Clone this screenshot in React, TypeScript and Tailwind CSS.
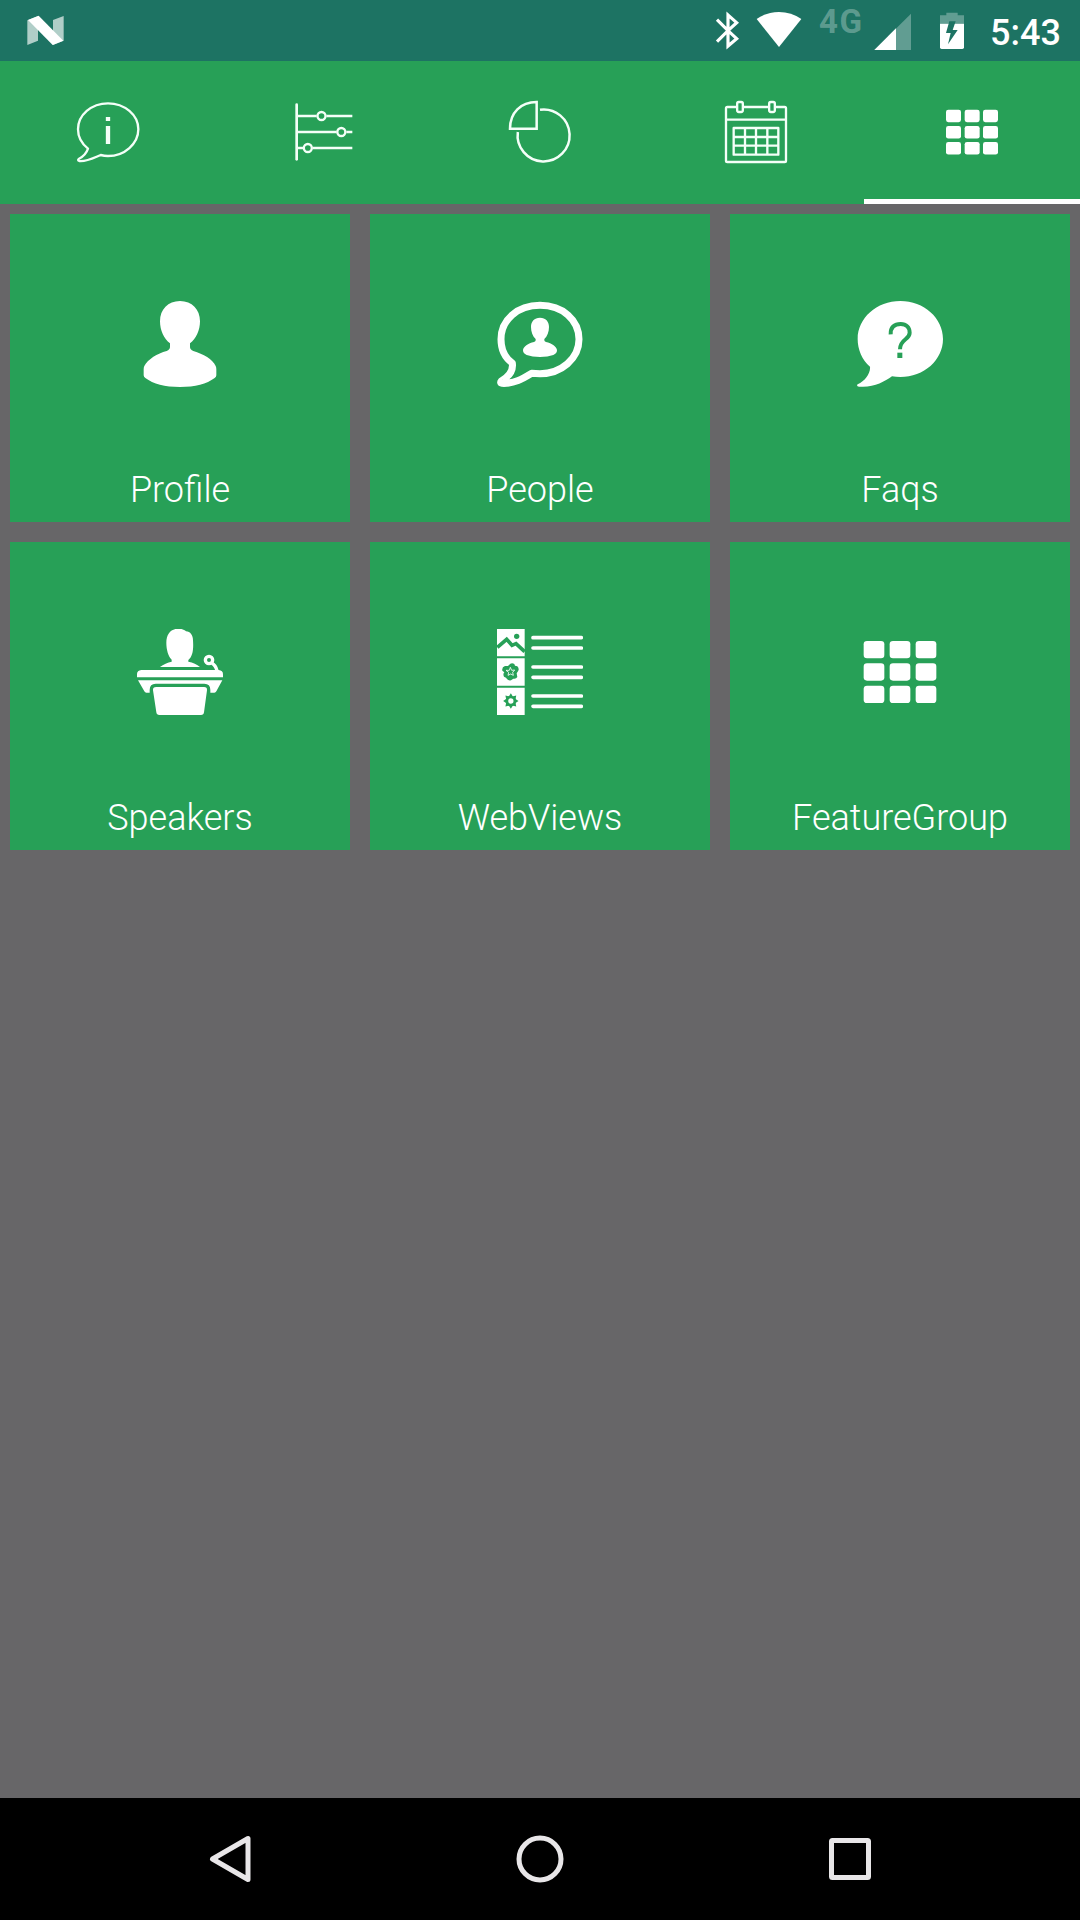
import type { ReactNode } from 'react';

interface IconProps {
    viewBox: string;
    className: string;
    children: ReactNode;
}

const Icon = ({ viewBox, className, children }: IconProps) => (
    <svg viewBox={viewBox} className={className} fill="currentColor">
        {children}
    </svg>
);

const InfoIcon = () => (
    <Icon viewBox="216 288 216 216" className="size-[72px]">
        <path
            d="M264 446C242 429 234 410 234 388C234 345 274 310 324 310S415 345 415 388S374 468 324 468Q313 468 302 465C282 473 262 485 238 483Q232 481 236 477C250 470 260 458 264 446Z"
            fill="none"
            stroke="currentColor"
            strokeWidth="7"
            strokeLinejoin="round"
        />
        <path d="M317.500 351h13v12h-13zM317.500 378h13v54h-13z" />
    </Icon>
);

const SlidersIcon = () => (
    <Icon viewBox="864 288 216 216" className="size-[72px]">
        <g fill="none" stroke="currentColor" strokeWidth="7">
            <path d="M893 348h57M979 348h78M893 396h117M1039 396h18M893 444h16M938 444h119" />
            <path d="M890 314V478" strokeWidth="8" strokeLinecap="round" />
            <circle cx="964.5" cy="348" r="12" />
            <circle cx="1024" cy="396" r="12" />
            <circle cx="923.5" cy="444" r="12" />
        </g>
    </Icon>
);

const PieIcon = () => (
    <Icon viewBox="72 48 216 216" className="size-[72px]">
        <g fill="none" stroke="currentColor" strokeWidth="7.5">
            <path d="M170 66V146H90C90 98 122 66 170 66Z" />
            <path d="M180 89A78 78 0 1 1 113.500 156" />
        </g>
    </Icon>
);

const CalendarIcon = () => (
    <Icon viewBox="60 288 216 216" className="size-[72px]">
        <g fill="none" stroke="currentColor" strokeWidth="7" strokeLinejoin="round">
            <path d="M108 321H82Q78 321 78 325V482Q78 486 82 486H254Q258 486 258 482V325Q258 321 254 321H228M132 321H204M78 359H258" />
            <rect x="111.500" y="306" width="17" height="30" rx="5" />
            <rect x="207.500" y="306" width="17" height="30" rx="5" />
            <path d="M101 384H235V464H101ZM101 411H235M101 437H235M135 384V464M168 384V464M202 384V464" />
        </g>
    </Icon>
);

const TabGridIcon = () => (
    <Icon viewBox="708 288 216 216" className="size-[72px]">
        {[329, 378, 426].map((y) =>
            [738, 794, 849].map((x) => (
                <rect key={`${x}-${y}`} x={x} y={y} width="45" height="37.500" rx="7" />
            ))
        )}
    </Icon>
);

const ProfileIcon = () => (
    <Icon viewBox="51 63 258 258" className="size-[86px]">
        <path d="M180 63C216 63 240 88 240 124C240 151 228 177 210 190V201Q210 209 220 213C250 222 278 238 287 258Q289 262 289 268V286Q289 291 284 294C260 312 226 321 180 321S100 312 76 294Q71 291 71 286V268Q71 262 73 258C84 237 112 221 140 213Q150 209 150 201V190C132 177 120 151 120 124C120 88 144 63 180 63Z" />
    </Icon>
);

const PeopleIcon = () => (
    <Icon viewBox="51 63 258 258" className="size-[86px]">
        <path
            d="M97 249C73 232 63 205 63 178C63 120 112 76 180 76S297 120 297 178S244 281 180 281Q167 281 155 280C132 294 104 312 66 310Q59 309 64 303C84 291 101 276 97 249Z"
            fill="none"
            stroke="currentColor"
            strokeWidth="21"
            strokeLinejoin="round"
        />
        <path d="M180 113C197 113 207 124 207 141C207 156 202 169 193 177V181Q193 184 198 186C215 190 231 200 231 211Q231 220 220 225Q204 231 180 231T140 225Q129 220 129 211C129 200 145 190 162 186Q167 184 167 181V177C158 169 153 156 153 141C153 124 163 113 180 113Z" />
    </Icon>
);

const FaqsIcon = () => (
    <Icon viewBox="51 63 258 258" className="size-[86px]">
        <path d="M181 63C252 63 309 114 309 177S252 291 181 291Q168 291 156 289C132 306 100 324 57 320Q48 318 53 313C75 303 92 280 90 260C66 239 53 209 53 177C53 114 110 63 181 63Z" />
        <path
            d="M152 163C151 142 163 132 182 132C199 132 209 142 209 158C209 180 180 176 180 208"
            fill="none"
            stroke="#27a057"
            strokeWidth="12"
        />
        <path d="M172 218h15v16h-15z" fill="#27a057" />
    </Icon>
);

const SpeakersIcon = () => (
    <Icon viewBox="51 57 258 258" className="size-[86px]">
        <path d="M175 56C185 56 193 59 198 64C211 65 219 75 219 91C221 119 218 139 205 150V155C219 157 231 163 240 171H120C130 163 143 157 155 155V149C145 139 139 119 139 98C139 71 154 56 175 56Z" />
        <path d="M64 180H296Q309 181 309 193V202H51V193Q51 181 64 180Z" />
        <path d="M54 211H307L289 244Q287 248 283 248H271V240Q271 221 253 221H107Q89 221 89 240V248H79Q75 248 73 244Z" />
        <path d="M109 231H252Q262 231 261 241L252 307Q251 315 243 315H118Q110 315 109 307L99 241Q98 231 109 231Z" />
        <circle cx="267" cy="150" r="11" fill="none" stroke="currentColor" strokeWidth="10" />
        <path d="M276 160Q287 166 291 182" fill="none" stroke="currentColor" strokeWidth="10" />
    </Icon>
);

const WebViewsIcon = () => (
    <Icon viewBox="51 57 258 258" className="size-[86px]">
        <path d="M51 57H134V139H51ZM51 145H134V227H51ZM51 233H134V315H51Z" />
        <path
            d="M159 83H304M159 114H304M159 171H304M159 202H304M159 258H304M159 289H304"
            stroke="currentColor"
            strokeWidth="11"
            strokeLinecap="round"
        />
        <g stroke="#27a057" fill="#27a057">
            <path d="M52 112L80 88L96 106L108 101L134 125" fill="none" strokeWidth="11" />
            <circle cx="110" cy="79" r="8" stroke="none" />
            <path
                d="M91 161Q97 158 103 162L105 167L112 169Q119 176 114 184L110 190L112 201Q108 208 100 206L93 211Q84 212 81 207L78 203L72 200Q68 192 73 187L67 182Q65 171 75 168L84 168Z"
                stroke="none"
            />
            <path
                d="M91 172L95 181L104 180L98 187L100 196L92 192L84 196L86 187L78 181L88 181Z"
                fill="none"
                stroke="white"
                strokeWidth="2.5"
                strokeLinejoin="round"
            />
            <circle cx="92.500" cy="273" r="12" fill="none" strokeWidth="8" />
            {[0, 45, 90, 135, 180, 225, 270, 315].map((angle) => (
                <path
                    key={angle}
                    d="M86 260L92.500 250L99 260Z"
                    stroke="none"
                    transform={`rotate(${angle} 92.5 273)`}
                />
            ))}
        </g>
    </Icon>
);

const FeatureGroupIcon = () => (
    <Icon viewBox="51 57 258 258" className="size-[86px]">
        {[93, 160, 227].map((y) =>
            [71, 149, 227].map((x) => (
                <rect key={`${x}-${y}`} x={x} y={y} width="62" height="52" rx="10" />
            ))
        )}
    </Icon>
);

const tabs = [
    { name: 'Info', icon: <InfoIcon /> },
    { name: 'Settings', icon: <SlidersIcon /> },
    { name: 'Charts', icon: <PieIcon /> },
    { name: 'Calendar', icon: <CalendarIcon /> },
    { name: 'More', icon: <TabGridIcon />, active: true },
];

const features = [
    { label: 'Profile', icon: <ProfileIcon /> },
    { label: 'People', icon: <PeopleIcon /> },
    { label: 'Faqs', icon: <FaqsIcon /> },
    { label: 'Speakers', icon: <SpeakersIcon /> },
    { label: 'WebViews', icon: <WebViewsIcon /> },
    { label: 'FeatureGroup', icon: <FeatureGroupIcon /> },
];

const StatusBar = () => (
    <div className="flex h-[61px] shrink-0 items-start bg-[#1d7363] pl-6 text-white">
        <Icon viewBox="72 0 132 183" className="h-[61px] w-11">
            <path d="M82 61L114 48V122L82 135ZM159 60L191 48V122L159 135Z" opacity=".65" />
            <path d="M84 60L116 47L190 122L158 135Z" />
        </Icon>
        <div className="ml-auto flex items-start">
            <Icon viewBox="30 0 120 183" className="h-[61px] w-10">
                <path
                    d="M51 59L84 92L110 68L84 45V138L110 116L84 92L51 125"
                    fill="none"
                    stroke="currentColor"
                    strokeWidth="9.5"
                />
            </Icon>
            <Icon viewBox="150 0 180 183" className="h-[61px] w-[60px]">
                <path d="M170 57Q200 36 237 36T304 57L237 141Z" />
            </Icon>
            <span className="mt-1 ml-[9px] w-[54px] text-[33px] leading-9 font-bold tracking-[1.5px] text-white/30">
                4G
            </span>
            <Icon viewBox="510 0 150 183" className="-ml-[3px] h-[61px] w-[50px]">
                <path d="M633 41V150H523Z" opacity=".3" />
                <path d="M588 85V150H523Z" />
            </Icon>
            <Icon viewBox="660 0 180 183" className="h-[61px] w-[60px]">
                <path d="M739 38H773V46H792V71H720V46H739Z" opacity=".3" />
                <path d="M720 71H792V142Q792 147 787 147H725Q720 147 720 142Z" />
                <path d="M748 64H767L758 90H773L744 133L752 99H738Z" fill="#1d7363" />
            </Icon>
            <span className="mt-[11px] ml-2.5 w-[90px] text-[36px] leading-[44px] font-medium">
                5:43
            </span>
        </div>
    </div>
);

const NavigationBar = () => (
    <nav className="flex h-[122px] shrink-0 items-center justify-center gap-[250px] bg-black text-[#e8e6e8]">
        <Icon viewBox="0 0 60 60" className="size-[60px]">
            <path
                d="M48 9.500V50.500L12.500 30Z"
                fill="none"
                stroke="currentColor"
                strokeWidth="5"
                strokeLinejoin="round"
            />
        </Icon>
        <Icon viewBox="0 0 60 60" className="size-[60px]">
            <circle cx="30" cy="30" r="21" fill="none" stroke="currentColor" strokeWidth="5" />
        </Icon>
        <Icon viewBox="0 0 60 60" className="size-[60px]">
            <rect
                x="11.500"
                y="11.500"
                width="37"
                height="37"
                rx="1"
                fill="none"
                stroke="currentColor"
                strokeWidth="5"
            />
        </Icon>
    </nav>
);

export default function App() {
    return (
        <div className="flex h-[1920px] w-[1080px] flex-col overflow-hidden bg-[#676668] font-['Roboto',sans-serif]">
            <StatusBar />

            <div className="grid h-[143px] shrink-0 grid-cols-5 bg-[#27a057] text-[#f4fff8]">
                {tabs.map(({ name, icon, active }) => (
                    <button
                        key={name}
                        aria-label={name}
                        className={`flex items-start justify-center pt-[35px] ${
                            active ? 'border-b-5 border-white text-white' : ''
                        }`}
                    >
                        {icon}
                    </button>
                ))}
            </div>

            <main className="grid flex-1 grid-cols-3 content-start gap-5 p-2.5 text-white">
                {features.map(({ label, icon }) => (
                    <button
                        key={label}
                        className="flex h-[308px] flex-col items-center justify-between bg-[#27a057] pt-[87px] pb-[11px]"
                    >
                        {icon}
                        <span className="text-[36px] leading-[42px] font-light">{label}</span>
                    </button>
                ))}
            </main>

            <NavigationBar />
        </div>
    );
}
